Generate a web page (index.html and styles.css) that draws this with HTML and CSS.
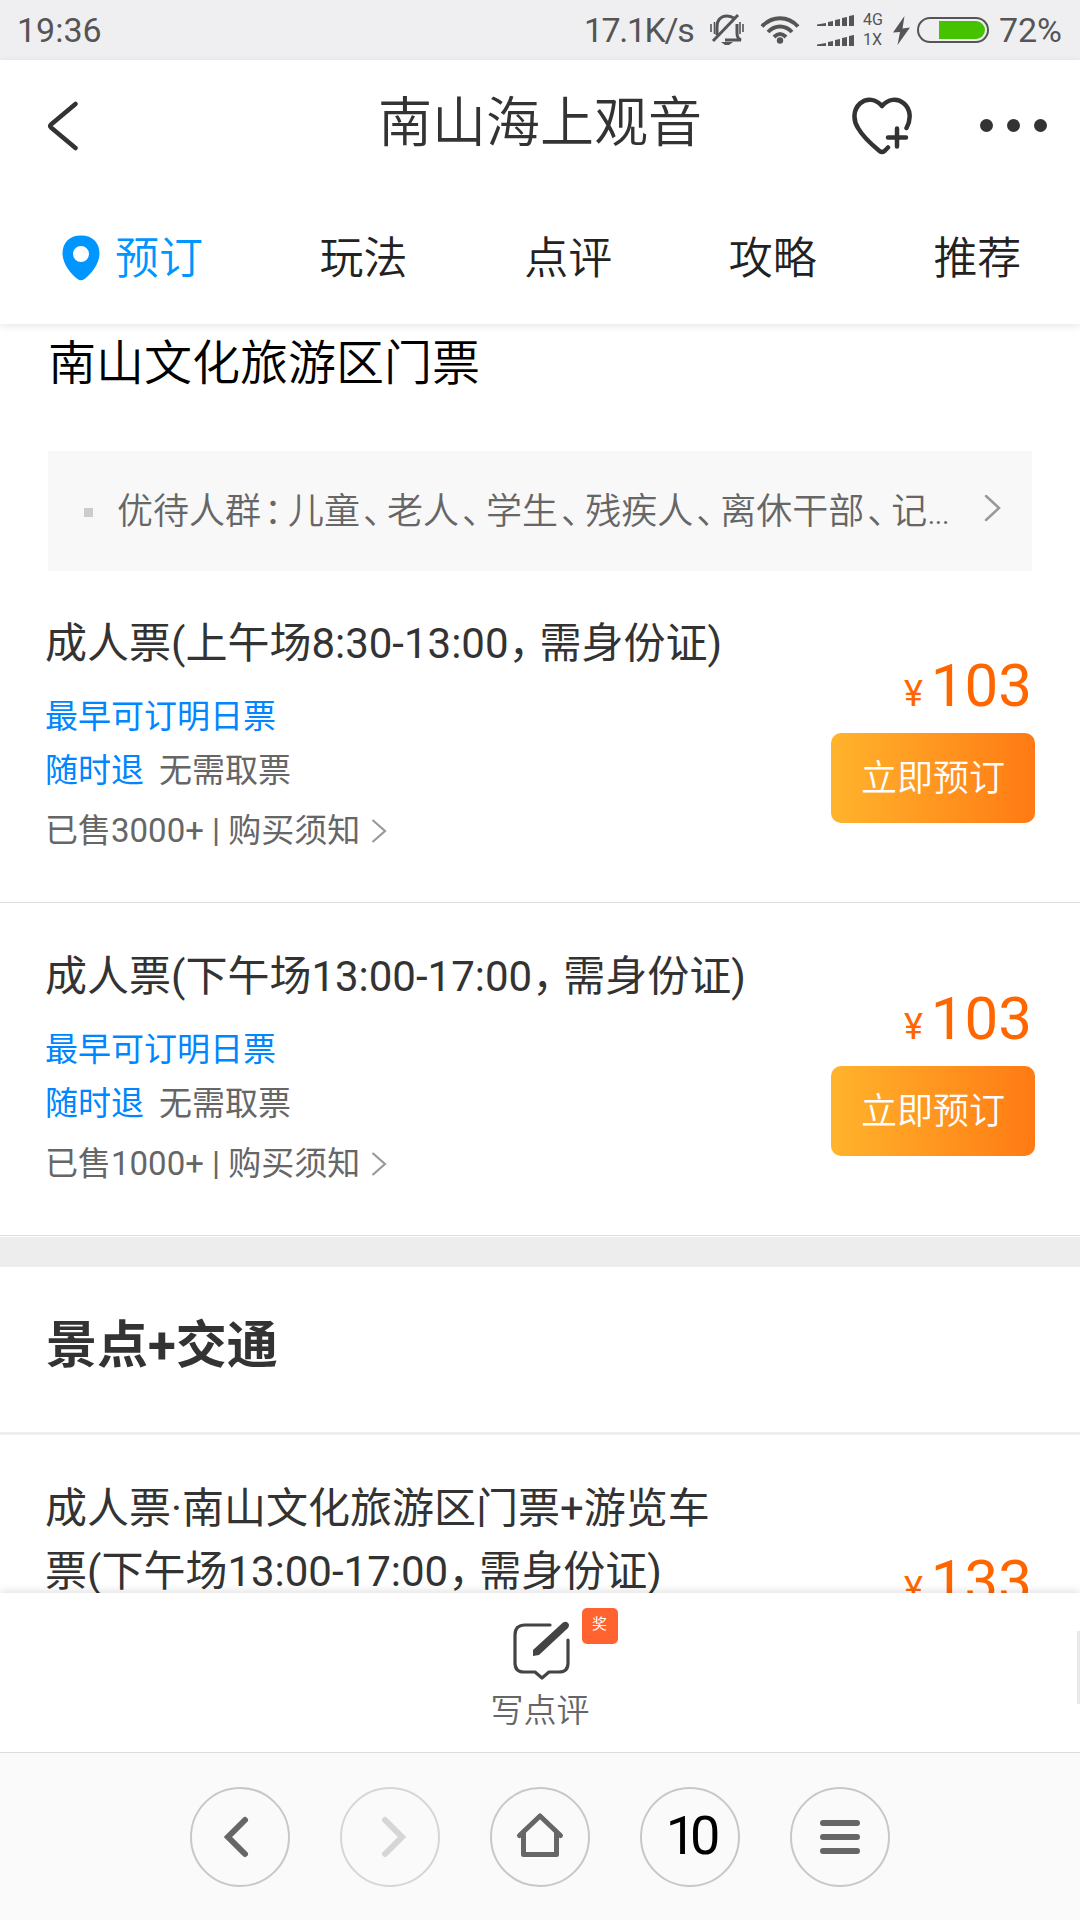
FILE: index.html
```html
<!DOCTYPE html>
<html lang="zh-CN">
<head>
  <meta charset="UTF-8">
  <title>南山海上观音</title>
  <link rel="stylesheet" href="styles.css">
</head>
<body>
  <div class="page">
    <div class="status-bar">
      <span class="clock">19:36</span>
      <span class="speed">17.1K/s</span>
      <svg class="bell" width="34" height="32" viewBox="0 0 34 32" fill="none" stroke="#555" stroke-width="3">
        <path d="M7 21V13C7 6 11 2 17 2C20 2 22 3 24 4M27 10V19C27 23 28 25 31 26H15" />
        <path d="M3 27L28 1" />
        <path d="M1 10V18M4.500 8V20M30 8V20M33 10V18" stroke-width="1.600" />
        <path d="M11 28H23L19 31H15Z" fill="#555" stroke="none" />
      </svg>
      <svg class="wifi" width="40" height="28" viewBox="0 0 40 28" fill="none" stroke="#555" stroke-width="4">
        <path d="M2 10.500C12 -.500 28 -.500 38 10.500M8 16C15 8.500 25 8.500 32 16M14 21C18 17 22 17 26 21" />
        <circle cx="20" cy="24.500" r="3.200" fill="#555" stroke="none" />
      </svg>
      <svg class="signal" width="37" height="31" viewBox="0 0 37 31" fill="#555">
        <path d="M0 11V9.500L9 8V11ZM11 11V7L16 6V11ZM18 11V5L23 4V11ZM25 11V3L30 2V11ZM32 11V1L37 0V11Z" />
        <path d="M0 31V29.500L9 28V31ZM11 31V27L16 26V31ZM18 31V25L23 24V31ZM25 31V23L30 22V31ZM32 31V21L37 20V31Z" />
      </svg>
      <span class="network"><span>4G</span><span>1X</span></span>
      <svg class="bolt" width="17" height="29" viewBox="0 0 17 29" fill="#555">
        <path d="M11.500 0L0 16.500L7 16L4.500 29L17 11.500L9.500 12.500Z" />
      </svg>
      <span class="battery"><span class="battery-level"></span></span>
      <span class="percent">72%</span>
    </div>

    <div class="header">
      <div class="title-bar">
        <svg class="back" width="31" height="50" viewBox="0 0 31 50" fill="none" stroke="#333" stroke-width="4.500" stroke-linecap="round" stroke-linejoin="round">
          <path d="M28.500 3L4 23.500Q2.500 25 4 26.500L28.500 47" />
        </svg>
        <h1>南山海上观音</h1>
        <svg class="heart" width="62" height="58" viewBox="0 0 62 58" fill="none" stroke="#333" stroke-width="4.500" stroke-linecap="round" stroke-linejoin="round">
          <path d="M55.500 31C60.500 22 59.500 12 53 6.500C46 .500 37 2 31 9C25 2 16 .500 9 6.500C2 13 2 23 7 31C12 40 20 47 28.500 54Q31 56 33.500 54L37 50.500" />
          <path d="M37 40.500H55M46 31.500V49.500" />
        </svg>
        <div class="more"><i></i><i></i><i></i></div>
      </div>
      <div class="tabs">
        <a class="tab active">
          <svg width="38" height="46" viewBox="0 0 38 46" fill="#0096ff" fill-rule="evenodd">
            <path d="M19 .500C7 .500 .500 8 .500 18.500C.500 29 9 39 15.500 44Q19 46.500 22.500 44C29 39 37.500 29 37.500 18.500C37.500 8 31 .500 19 .500ZM19 11A8 8 0 1 1 19 27A8 8 0 1 1 19 11Z" />
          </svg>
          <span>预订</span>
        </a>
        <a class="tab">玩法</a>
        <a class="tab">点评</a>
        <a class="tab">攻略</a>
        <a class="tab">推荐</a>
      </div>
    </div>

    <div class="content">
      <h2>南山文化旅游区门票</h2>
      <div class="notice">
        <i class="bullet"></i>
        <p>优待人群<b>：</b>儿童<b>、</b>老人<b>、</b>学生<b>、</b>残疾人<b>、</b>离休干部<b>、</b>记<span>...</span></p>
        <svg width="17" height="28" viewBox="0 0 17 28" fill="none" stroke="#999" stroke-width="2.500" stroke-linecap="round"><path d="M2 2L15 14L2 26" /></svg>
      </div>

      <div class="ticket first">
        <div class="info">
          <h3>成人票(上午场8:30-13:00<b>，</b>需身份证)</h3>
          <p class="blue">最早可订明日票</p>
          <p class="tags"><span class="blue">随时退</span><span>无需取票</span></p>
          <p class="sold"><span>已售3000+ | 购买须知</span><svg width="16" height="26" viewBox="0 0 16 26" fill="none" stroke="#999" stroke-width="2.200"><path d="M1.500 2L14 13L1.500 24" /></svg></p>
        </div>
        <div class="buy">
          <div class="price"><small>¥</small>103</div>
          <button>立即预订</button>
        </div>
      </div>

      <div class="ticket">
        <div class="info">
          <h3>成人票(下午场13:00-17:00<b>，</b>需身份证)</h3>
          <p class="blue">最早可订明日票</p>
          <p class="tags"><span class="blue">随时退</span><span>无需取票</span></p>
          <p class="sold"><span>已售1000+ | 购买须知</span><svg width="16" height="26" viewBox="0 0 16 26" fill="none" stroke="#999" stroke-width="2.200"><path d="M1.500 2L14 13L1.500 24" /></svg></p>
        </div>
        <div class="buy">
          <div class="price"><small>¥</small>103</div>
          <button>立即预订</button>
        </div>
      </div>

      <div class="gap"></div>
      <h2 class="group-title">景点+交通</h2>

      <div class="ticket tall">
        <div class="info">
          <h3>成人票·南山文化旅游区门票+游览车<br>票(下午场13:00-17:00<b>，</b>需身份证)</h3>
        </div>
        <div class="buy">
          <div class="price"><small>¥</small>133</div>
        </div>
      </div>
    </div>

    <div class="review-bar">
      <div class="review">
        <svg width="58" height="60" viewBox="0 0 58 60" fill="none" stroke="#444" stroke-width="3.200" stroke-linecap="round" stroke-linejoin="round">
          <path d="M37 4H12Q2 4 2 14V42Q2 51 11 51H22L29 57L36 51H46Q55 51 55 42V19" />
          <path d="M20 35V29L50 1.500Q53 0 55 2Q57 4 55 7L26 34Z" fill="#444" stroke="none" />
        </svg>
        <span class="badge">奖</span>
        <span class="review-text">写点评</span>
      </div>
      <div class="scrollbar"></div>
    </div>

    <div class="browser-bar">
      <a class="round">
        <svg width="60" height="60" viewBox="0 0 60 60" fill="none" stroke="#666" stroke-width="6" stroke-linecap="round"><path d="M35 13L18 30L35 47" /></svg>
      </a>
      <a class="round disabled">
        <svg width="60" height="60" viewBox="0 0 60 60" fill="none" stroke="#d6d6d6" stroke-width="6" stroke-linecap="round"><path d="M25 13L42 30L25 47" /></svg>
      </a>
      <a class="round">
        <svg width="60" height="60" viewBox="0 0 60 60" fill="none" stroke="#666" stroke-width="5" stroke-linecap="round" stroke-linejoin="round"><path d="M9.500 28.500L30 9L50.500 28.500M13.500 26V47.500H46.500V26" /></svg>
      </a>
      <a class="round count">10</a>
      <a class="round">
        <svg width="60" height="60" viewBox="0 0 60 60" stroke="#666" stroke-width="6" stroke-linecap="round"><path d="M13 16H47M13 30H47M13 44H47" /></svg>
      </a>
    </div>
  </div>
</body>
</html>
```
FILE: styles.css
```css
* {
  box-sizing: border-box;
}

body {
  margin: 0;
  font-family: Roboto, "Noto Sans CJK SC", sans-serif;
  color: #333;
  background: #fff;
}

h1, h2, h3, p {
  margin: 0;
  font-weight: 400;
}

svg {
  display: block;
  flex: none;
}

.page {
  width: 1080px;
  height: 1920px;
  display: flex;
  flex-direction: column;
  overflow: hidden;
}

/* status bar */
.status-bar {
  height: 60px;
  flex: none;
  display: flex;
  align-items: center;
  padding: 0 18px 0 17px;
  background: #efeff1;
  color: #555;
  font-size: 34px;
  line-height: 60px;
  white-space: nowrap;
}

.clock {
  width: 567px;
}

.speed {
  width: 126px;
  letter-spacing: -1.4px;
}

.wifi {
  margin-left: 16px;
}

.signal {
  margin-left: 17px;
}

.network {
  display: flex;
  flex-direction: column;
  width: 30px;
  margin-left: 9px;
  font-size: 16px;
  line-height: 20px;
}

.bolt {
  margin-right: 7px;
}

.battery {
  flex: none;
  width: 72px;
  height: 26px;
  padding: 2px;
  border: 2px solid #555;
  border-radius: 13px;
  display: flex;
  justify-content: flex-end;
}

.battery-level {
  width: 46px;
  background: #46c300;
  border-radius: 0 9px 9px 0;
}

.percent {
  margin-left: 10px;
}

/* header */
.header {
  height: 264px;
  flex: none;
  background: #fff;
  box-shadow: 0 2px 8px rgba(0, 0, 0, 0.1);
  z-index: 1;
}

.title-bar {
  height: 132px;
  display: flex;
  align-items: center;
  padding: 0 33px 0 47px;
}

.title-bar h1 {
  width: 340px;
  margin-left: 300px;
  font-size: 54px;
  font-weight: 350;
  line-height: 120px;
  padding-bottom: 4px;
}

.heart {
  margin-left: 133px;
}

.more {
  display: flex;
  justify-content: space-between;
  width: 67px;
  margin-left: 67px;
  padding-bottom: 1px;
}

.more i {
  width: 13px;
  height: 13px;
  border-radius: 50%;
  background: #333;
}

.tabs {
  display: flex;
  padding: 1px 14px 0 57px;
  font-size: 44px;
  font-weight: 350;
  line-height: 132px;
  color: #222;
}

.tab {
  width: 204.6px;
  padding-left: 58px;
  flex: none;
}

.tab.active {
  display: flex;
  align-items: center;
  padding-left: 5px;
  color: #0096ff;
}

.tab.active svg {
  margin-bottom: 3px;
}

.tab.active span {
  margin-left: 15px;
}

/* content */
.content {
  height: 1269px;
  flex: none;
  overflow: hidden;
}

.content b {
  font-weight: inherit;
}

.content h2 {
  padding: 4px 0 0 48px;
  font-size: 48px;
  font-weight: 350;
  line-height: 72px;
  height: 127px;
  color: #000;
}

.notice {
  display: flex;
  align-items: center;
  height: 120px;
  margin: 0 48px;
  padding: 0 31px 6px 36px;
  background: #f8f8f8;
  color: #666;
}

.notice p {
  flex: 1;
  margin-left: 24px;
  font-size: 36px;
  font-weight: 350;
  white-space: nowrap;
}

.notice b {
  margin-left: 3px;
  letter-spacing: -12px;
}

.notice p span {
  letter-spacing: -1.5px;
}

.bullet {
  width: 9px;
  height: 9px;
  margin-top: 9px;
  background: #ccc;
}

.ticket {
  display: flex;
  justify-content: space-between;
  height: 333px;
  padding: 42px 45px 0 45px;
  border-bottom: 1px solid #ddd;
}

.ticket.first {
  height: 332px;
  padding-top: 41px;
}

.ticket h3 {
  font-size: 42px;
  line-height: 63px;
  white-space: nowrap;
}

.ticket h3 b {
  letter-spacing: -11px;
}

.ticket p {
  font-size: 33px;
  line-height: 54px;
  color: #666;
}

.ticket .blue {
  color: #0086ff;
}

.ticket h3 + p {
  margin-top: 15px;
}

.tags span + span {
  margin-left: 15px;
}

.sold {
  display: flex;
  align-items: center;
  margin-top: 6px;
}

.sold svg {
  margin-left: 11px;
}

.buy {
  width: 204px;
  padding-top: 35px;
}

.tall .buy {
  padding-top: 66px;
}

.price {
  padding-right: 3px;
  font-size: 60px;
  line-height: 78px;
  height: 86px;
  text-align: right;
  color: #ff6600;
}

.price small {
  font-size: 36px;
  margin-right: 8px;
}

.buy button {
  display: block;
  width: 204px;
  height: 90px;
  padding: 0 0 6px;
  border: none;
  border-radius: 10px;
  background: linear-gradient(to right, #ffb42c, #ff7a14);
  color: #fff;
  font: inherit;
  font-size: 36px;
  font-weight: 350;
}

.gap {
  height: 31px;
  border-top: 1px solid #fff;
  background: #ededed;
}

.content .group-title {
  height: 168px;
  padding: 0 0 0 46px;
  border-bottom: 3px solid #eee;
  font-size: 51px;
  font-weight: 700;
  line-height: 158px;
  color: #333;
}

/* write a review */
.review-bar {
  position: relative;
  height: 159px;
  flex: none;
  display: flex;
  justify-content: center;
  background: #fff;
  box-shadow: 0 -2px 8px rgba(0, 0, 0, 0.12);
  z-index: 1;
}

.review {
  position: relative;
  display: flex;
  flex-direction: column;
  align-items: center;
  padding-top: 28px;
}

.review svg {
  margin-left: 3px;
}

.review-text {
  margin-top: 5px;
  font-size: 33px;
  font-weight: 350;
  line-height: 50px;
  color: #666;
}

.badge {
  position: absolute;
  left: 91px;
  top: 15px;
  width: 36px;
  height: 36px;
  border-radius: 5px;
  background: #ff6430;
  color: #fff;
  font-size: 15px;
  line-height: 33px;
  text-align: center;
}

.scrollbar {
  position: absolute;
  right: 0;
  top: 38px;
  width: 3px;
  height: 73px;
  background: #e9e9e9;
}

/* browser buttons */
.browser-bar {
  height: 168px;
  flex: none;
  display: flex;
  justify-content: center;
  gap: 50px;
  padding-top: 34px;
  border-top: 1px solid #ddd;
  background: #fafafa;
  z-index: 2;
}

.round {
  width: 100px;
  height: 100px;
  border: 2px solid #c8c8c8;
  border-radius: 50%;
  display: flex;
  align-items: center;
  justify-content: center;
}

.round.disabled {
  border-color: #d6d6d6;
}

.count {
  padding-bottom: 4px;
  font-size: 54px;
  letter-spacing: -6px;
  color: #000;
}
```
